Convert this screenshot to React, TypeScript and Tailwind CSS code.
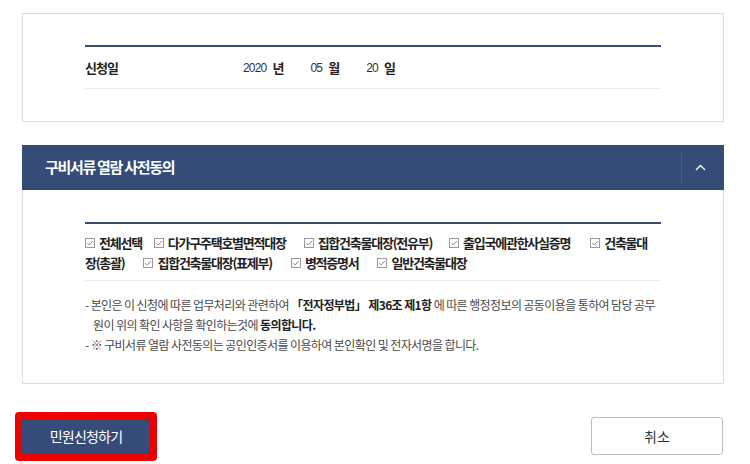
import React from "react"

const KR = "font-['Noto_Sans_CJK_KR','Noto_Sans',sans-serif]"

function CheckIcon() {
  return (
    <svg width="10" height="10" viewBox="0 0 10 10" className="shrink-0">
      <rect x="0.5" y="0.5" width="9" height="9" fill="#fff" stroke="#9a9a9a" />
      <path d="M2.3 5.1 L4.2 7 L7.8 3" fill="none" stroke="#8a8a8a" strokeWidth="1" />
    </svg>
  )
}

function Check({ label }: { label: string }) {
  return (
    <span className="inline-flex items-center gap-[4px]">
      <CheckIcon />
      <span>{label}</span>
    </span>
  )
}

export default function App() {
  return (
    <div className={`w-[750px] h-[464px] bg-white overflow-hidden text-[#222] ${KR}`}>
      {/* 신청일 */}
      <div className="mt-[13px] ml-[22px] w-[702px] border border-[#dcdcdc] px-[62px] pt-[31px] pb-[32px]">
        <div className="h-[2px] bg-[#3b4b6b]" />
        <div className="h-[42px] flex items-center border-b border-[#ececec]">
          <span className="w-[158px] text-[13px] font-bold tracking-[-1px]">신청일</span>
          <span className="text-[12px] text-[#333] tracking-[-0.8px] font-['Liberation_Sans',sans-serif]">2020</span>
          <span className="ml-[6px] text-[13px] font-bold">년</span>
          <span className="ml-[26px] text-[12px] text-[#333] tracking-[-0.8px] font-['Liberation_Sans',sans-serif]">05</span>
          <span className="ml-[6px] text-[13px] font-bold">월</span>
          <span className="ml-[26px] text-[12px] text-[#333] tracking-[-0.8px] font-['Liberation_Sans',sans-serif]">20</span>
          <span className="ml-[6px] text-[13px] font-bold">일</span>
        </div>
      </div>

      {/* 구비서류 열람 사전동의 */}
      <div className="mt-[23px] ml-[22px] w-[702px]">
        <div className="h-[45px] bg-[#344c77] flex items-center">
          <h2 className="flex-1 pl-[23px] text-white text-[15px] font-bold tracking-[-1.3px]">구비서류 열람 사전동의</h2>
          <div className="w-px h-[30px] bg-[#4a5e84]" />
          <div className="w-[42px] pr-[5px] flex items-center justify-center">
            <svg width="11" height="7" viewBox="0 0 11 7">
              <path d="M1 6 L5.5 1.5 L10 6" fill="none" stroke="#fff" strokeWidth="1.3" />
            </svg>
          </div>
        </div>
        <div className="border border-t-0 border-[#dcdcdc] px-[62px] pt-[32px] pb-[28px]">
          <div className="h-[2px] bg-[#3b4b6b]" />
          <div className="pt-[9px] pb-[7px] border-b border-[#ececec] text-[13px] font-bold leading-[20px] tracking-[-1.25px] whitespace-nowrap">
            <div className="flex items-center">
              <span className="mr-[12px]"><Check label="전체선택" /></span>
              <span className="mr-[18px]"><Check label="다가구주택호별면적대장" /></span>
              <span className="mr-[17px]"><Check label="집합건축물대장(전유부)" /></span>
              <span className="mr-[20px]"><Check label="출입국에관한사실증명" /></span>
              <Check label="건축물대" />
            </div>
            <div className="flex items-center">
              <span className="mr-[19px]">장(총괄)</span>
              <span className="mr-[19px]"><Check label="집합건축물대장(표제부)" /></span>
              <span className="mr-[19px]"><Check label="병적증명서" /></span>
              <Check label="일반건축물대장" />
            </div>
          </div>
          <div className="mt-[14px] text-[12px] leading-[20px] text-[#4a4a4a] tracking-[-0.6px] whitespace-nowrap">
            <p>
              - 본인은 이 신청에 따른 업무처리와 관련하여 <b className="text-[#222]">「전자정부법」</b> <b className="text-[#222]">제36조 제1항</b> 에 따른 행정정보의 공동이용을 통하여 담당 공무
            </p>
            <p className="pl-[8px]">
              원이 위의 확인 사항을 확인하는것에 <b className="text-[#222]">동의합니다.</b>
            </p>
            <p>- ※ 구비서류 열람 사전동의는 공인인증서를 이용하여 본인확인 및 전자서명을 합니다.</p>
          </div>
        </div>
      </div>

      {/* 버튼 */}
      <div className="mt-[28px] pl-[15px] pr-[27px] flex items-start justify-between">
        <div className="border-[7px] border-[#ee0000] rounded-[4px]">
          <button className="block w-[128px] h-[35px] bg-[#344c77] text-white text-[14px] tracking-[-0.8px]">민원신청하기</button>
        </div>
        <button className="mt-[5px] w-[132px] h-[38px] border border-[#bdbdbd] rounded-[3px] bg-white text-[14px] text-[#333]">취소</button>
      </div>
    </div>
  )
}
